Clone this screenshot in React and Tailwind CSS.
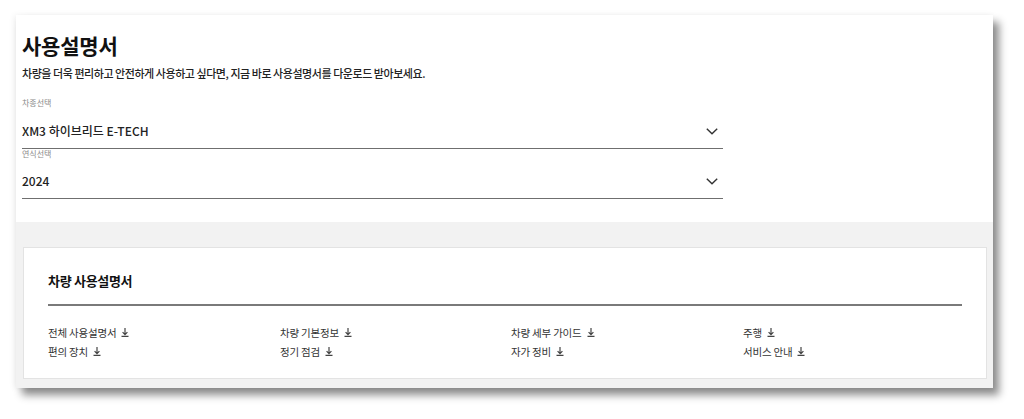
import React from 'react';

const font = { fontFamily: '"Noto Sans CJK KR", "Noto Sans", sans-serif' };

const links = [
  '전체 사용설명서', '차량 기본정보', '차량 세부 가이드', '주행',
  '편의 장치', '정기 점검', '자가 정비', '서비스 안내',
];

function Chevron() {
  return (
    <svg width="12" height="7" viewBox="0 0 12 7" fill="none">
      <path d="M0.8 0.8 L6 5.8 L11.2 0.8" stroke="#333" strokeWidth="1.4" />
    </svg>
  );
}

function DownloadIcon() {
  return (
    <svg width="8" height="9" viewBox="0 0 8 9" fill="none" className="ml-[5px] shrink-0">
      <path d="M4 0 V6.5 M1.6 4.2 L4 6.6 L6.4 4.2 M0.5 8.4 H7.5" stroke="#444" strokeWidth="1.2" />
    </svg>
  );
}

function SelectField({ label, value, gap }) {
  return (
    <div className="w-[701px]">
      <p className="text-[8px] leading-[10px] text-[#8a8a8a]">{label}</p>
      <div className={`${gap} flex items-center justify-between pb-[9px] border-b-[1.5px] border-[#6f6f6f] pr-[5px]`}>
        <span className="text-[12px] leading-[16px] text-[#222] font-medium">{value}</span>
        <Chevron />
      </div>
    </div>
  );
}

export default function App() {
  return (
    <div className="w-[1024px] h-[419px] bg-white pt-[15px] pl-4 overflow-hidden" style={font}>
      <div className="w-[977px] bg-white shadow-[6px_7px_8px_rgba(0,0,0,0.45),-2px_0_6px_rgba(0,0,0,0.06)]">
        {/* top */}
        <div className="pl-[6px] pt-[18px] pb-[23px]">
          <h1 className="text-[21px] leading-[24px] font-bold text-[#111] tracking-[-0.2px]">사용설명서</h1>
          <p className="mt-2 text-[11px] leading-[16px] font-medium text-[#222] tracking-[-0.45px]">
            차량을 더욱 편리하고 안전하게 사용하고 싶다면, 지금 바로 사용설명서를 다운로드 받아보세요.
          </p>
          <div className="mt-[17px]">
            <SelectField label="차종선택" value="XM3 하이브리드 E-TECH" gap="mt-[15px]" />
            <SelectField label="연식선택" value="2024" gap="mt-[14px]" />
          </div>
        </div>

        {/* downloads */}
        <div className="bg-[#f2f2f2] pt-[25px] pb-[9px] pl-[7px] pr-[6px]">
          <div className="bg-white border border-[#e3e3e3] pt-[25px] pb-[19px] pl-6 pr-[24px]">
            <h2 className="text-[13px] leading-[16px] font-bold text-[#111] tracking-[-0.3px]">차량 사용설명서</h2>
            <div className="mt-[15px] h-[1.5px] bg-[#7a7a7a]" />
            <div className="mt-[20px] grid grid-cols-[232px_231px_232px_1fr] gap-y-[5px]">
              {links.map((l) => (
                <div key={l} className="flex items-center text-[10.5px] leading-[14px] text-[#333] tracking-[-0.2px]">
                  <span>{l}</span>
                  <DownloadIcon />
                </div>
              ))}
            </div>
          </div>
        </div>
      </div>
    </div>
  );
}
